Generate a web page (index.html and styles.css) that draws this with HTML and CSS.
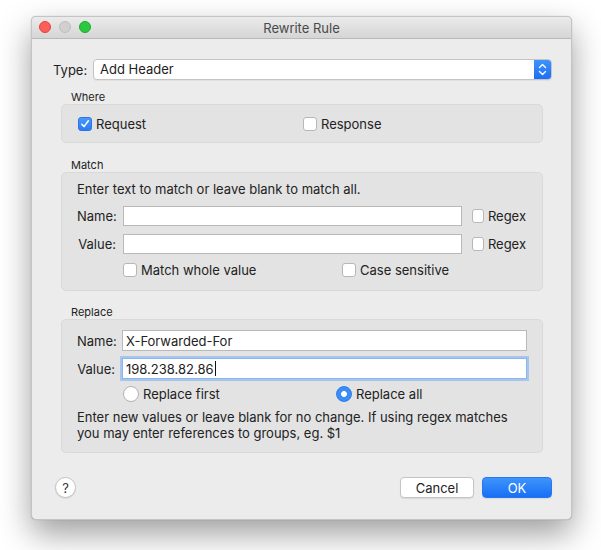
FILE: index.html
```html
<!DOCTYPE html>
<html>
<head>
<meta charset="utf-8">
<link rel="stylesheet" href="styles.css">
</head>
<body>
<div class="window">
  <div class="titlebar">
    <div class="lights">
      <span class="light red"></span>
      <span class="light gray"></span>
      <span class="light green"></span>
    </div>
    <div class="title">Rewrite Rule</div>
  </div>
  <div class="content">
    <div class="type-row">
      <span class="type-label">Type:</span>
      <div class="select">
        <span class="select-text">Add Header</span>
        <span class="stepper">
          <svg width="9" height="13" viewBox="0 0 9 13"><path d="M1.5 4.5 L4.5 1.5 L7.5 4.5 M1.5 8.5 L4.5 11.5 L7.5 8.5" fill="none" stroke="#fff" stroke-width="1.4" stroke-linecap="round" stroke-linejoin="round"/></svg>
        </span>
      </div>
    </div>

    <div class="group group-where">
      <div class="group-label">Where</div>
      <div class="box where-box">
        <label class="check"><span class="cb checked"><svg width="10" height="10" viewBox="0 0 10 10"><path d="M1.8 5.2 L4 7.6 L8.4 1.8" fill="none" stroke="#fff" stroke-width="1.5" stroke-linecap="round" stroke-linejoin="round"/></svg></span>Request</label>
        <label class="check"><span class="cb"></span>Response</label>
      </div>
    </div>

    <div class="group group-match">
      <div class="group-label">Match</div>
      <div class="box match-box">
        <div class="hint">Enter text to match or leave blank to match all.</div>
        <div class="field-row">
          <span class="field-label">Name:</span>
          <span class="field"></span>
          <label class="check regex"><span class="cb"></span>Regex</label>
        </div>
        <div class="field-row">
          <span class="field-label">Value:</span>
          <span class="field"></span>
          <label class="check regex"><span class="cb"></span>Regex</label>
        </div>
        <div class="option-row match-options">
          <label class="check"><span class="cb"></span>Match whole value</label>
          <label class="check"><span class="cb"></span>Case sensitive</label>
        </div>
      </div>
    </div>

    <div class="group group-replace">
      <div class="group-label">Replace</div>
      <div class="box replace-box">
        <div class="field-row tall">
          <span class="field-label">Name:</span>
          <span class="field">X-Forwarded-For</span>
        </div>
        <div class="field-row tall">
          <span class="field-label">Value:</span>
          <span class="field focused">198.238.82.86<span class="caret"></span></span>
        </div>
        <div class="option-row replace-options">
          <label class="check"><span class="radio"></span>Replace first</label>
          <label class="check"><span class="radio on"></span>Replace all</label>
        </div>
        <div class="note">Enter new values or leave blank for no change. If using regex matches<br>you may enter references to groups, eg. $1</div>
      </div>
    </div>

    <div class="footer">
      <span class="help">?</span>
      <div class="buttons">
        <span class="btn">Cancel</span>
        <span class="btn primary">OK</span>
      </div>
    </div>
  </div>
</div>
</body>
</html>
```
FILE: styles.css
```css
* { box-sizing: border-box; }
html, body { margin: 0; padding: 0; background: #ffffff; }
body {
  font-family: "Inter", "Liberation Sans", sans-serif;
  font-size: 13px;
  color: #222;
  width: 601px;
  height: 550px;
  overflow: hidden;
}
.window {
  margin: 16px 0 0 31px;
  width: 541px;
  height: 504px;
  background: #ececec;
  border: 1px solid #c4c4c4;
  border-radius: 5px;
  box-shadow: 0 14px 32px rgba(0,0,0,0.38), 0 0 1px rgba(0,0,0,0.3);
  overflow: hidden;
}
.titlebar {
  height: 22px;
  background: linear-gradient(#ebebeb, #d5d5d5);
  border-bottom: 1px solid #b9b9b9;
  position: relative;
  display: flex;
  align-items: center;
  justify-content: center;
}
.lights {
  position: absolute;
  left: 7px;
  top: 4px;
  display: flex;
  gap: 8px;
}
.light {
  width: 12px;
  height: 12px;
  border-radius: 50%;
}
.light.red { background: #fc5f57; border: 1px solid #e0443e; }
.light.gray { background: #d0d0d0; border: 1px solid #bdbdbd; }
.light.green { background: #2ac940; border: 1px solid #1daa2c; }
.title {
  font-size: 13px;
  color: #4a4a4a;
}
.content {
  padding: 20px 19px 0 20px;
}
.type-row {
  display: flex;
  align-items: center;
  height: 21px;
}
.type-label {
  width: 41px;
  padding-left: 1px;
}
.select {
  flex: 1;
  height: 21px;
  display: flex;
  background: #fff;
  border: 1px solid #c4c4c4;
  border-radius: 4px;
  box-shadow: 0 1px 1px rgba(0,0,0,0.06);
  overflow: hidden;
}
.select-text {
  flex: 1;
  padding-left: 6px;
  line-height: 19px;
}
.stepper {
  width: 17px;
  background: linear-gradient(#3f93fb, #1c6ff3);
  display: flex;
  align-items: center;
  justify-content: center;
}
.group {
  margin: 0 9px;
}
.group-where { margin-top: 10px; }
.group-match { margin-top: 15px; }
.group-replace { margin-top: 14px; }
.group-label {
  font-size: 11px;
  line-height: 14px;
  padding-left: 10px;
  color: #222;
}
.box {
  background: #e3e3e3;
  border: 1px solid #d9d9d9;
  border-radius: 5px;
}
.where-box {
  height: 39px;
  display: grid;
  grid-template-columns: 225px 1fr;
  align-items: center;
  padding-left: 16px;
}
.check {
  display: flex;
  align-items: center;
  gap: 4px;
  white-space: nowrap;
}
.cb {
  width: 14px;
  height: 14px;
  border-radius: 3px;
  background: #fff;
  border: 1px solid #b7b7b7;
  display: flex;
  align-items: center;
  justify-content: center;
}
.cb.checked {
  background: linear-gradient(#4b98fb, #2a7cf5);
  border-color: #2a74e5;
}
.match-box {
  height: 119px;
  padding: 8px 16px 0 15px;
}
.hint {
  line-height: 16px;
  margin-bottom: 9px;
}
.field-row {
  display: flex;
  align-items: center;
  height: 20px;
  margin-bottom: 8px;
}
.field-label {
  width: 46px;
  text-align: right;
  padding-right: 7px;
}
.field {
  flex: 1;
  height: 20px;
  background: #fff;
  border: 1px solid #b9b9b9;
  line-height: 18px;
  padding-left: 3px;
  display: flex;
  align-items: center;
}
.regex {
  margin-left: 10px;
  width: 54px;
}
.option-row {
  display: grid;
  align-items: center;
  height: 16px;
}
.match-options {
  grid-template-columns: 219px 1fr;
  padding-left: 46px;
}
.replace-box {
  height: 134px;
  padding: 10px 15px 0 15px;
}
.field-row.tall { height: 21px; margin-bottom: 7px; }
.field-row.tall .field { height: 21px; }
.field-row.tall .field-label { width: 45px; }
.field.focused {
  border-color: #8fb5e7;
  box-shadow: 0 0 0 2px #a6c6f0;
}
.caret {
  display: inline-block;
  width: 1px;
  height: 15px;
  background: #111;
  margin-left: 1px;
}
.replace-options {
  grid-template-columns: 213px 1fr;
  padding-left: 46px;
  margin-top: 1px;
  margin-bottom: 7px;
}
.radio {
  width: 16px;
  height: 16px;
  border-radius: 50%;
  background: #fff;
  border: 1px solid #b3b3b3;
  display: inline-block;
}
.radio.on {
  background: radial-gradient(circle, #fff 0 2.6px, #3b8cf7 3.2px);
  border-color: #2f7ce8;
}
.note {
  line-height: 16px;
}
.footer {
  display: flex;
  align-items: center;
  justify-content: space-between;
  margin-top: 24px;
  padding-left: 3px;
}
.help {
  width: 21px;
  height: 21px;
  border-radius: 50%;
  background: #fff;
  border: 1px solid #c2c2c2;
  box-shadow: 0 1px 1px rgba(0,0,0,0.08);
  display: flex;
  align-items: center;
  justify-content: center;
  font-size: 13px;
  color: #333;
}
.buttons {
  display: flex;
  gap: 8px;
}
.btn {
  width: 74px;
  height: 21px;
  border-radius: 4px;
  background: #fff;
  border: 1px solid #c4c4c4;
  box-shadow: 0 1px 1px rgba(0,0,0,0.08);
  display: flex;
  align-items: center;
  justify-content: center;
  color: #222;
}
.btn.primary {
  width: 70px;
  background: linear-gradient(#3f94fb, #176ff4);
  border-color: #2a76ee;
  color: #fff;
}
```
